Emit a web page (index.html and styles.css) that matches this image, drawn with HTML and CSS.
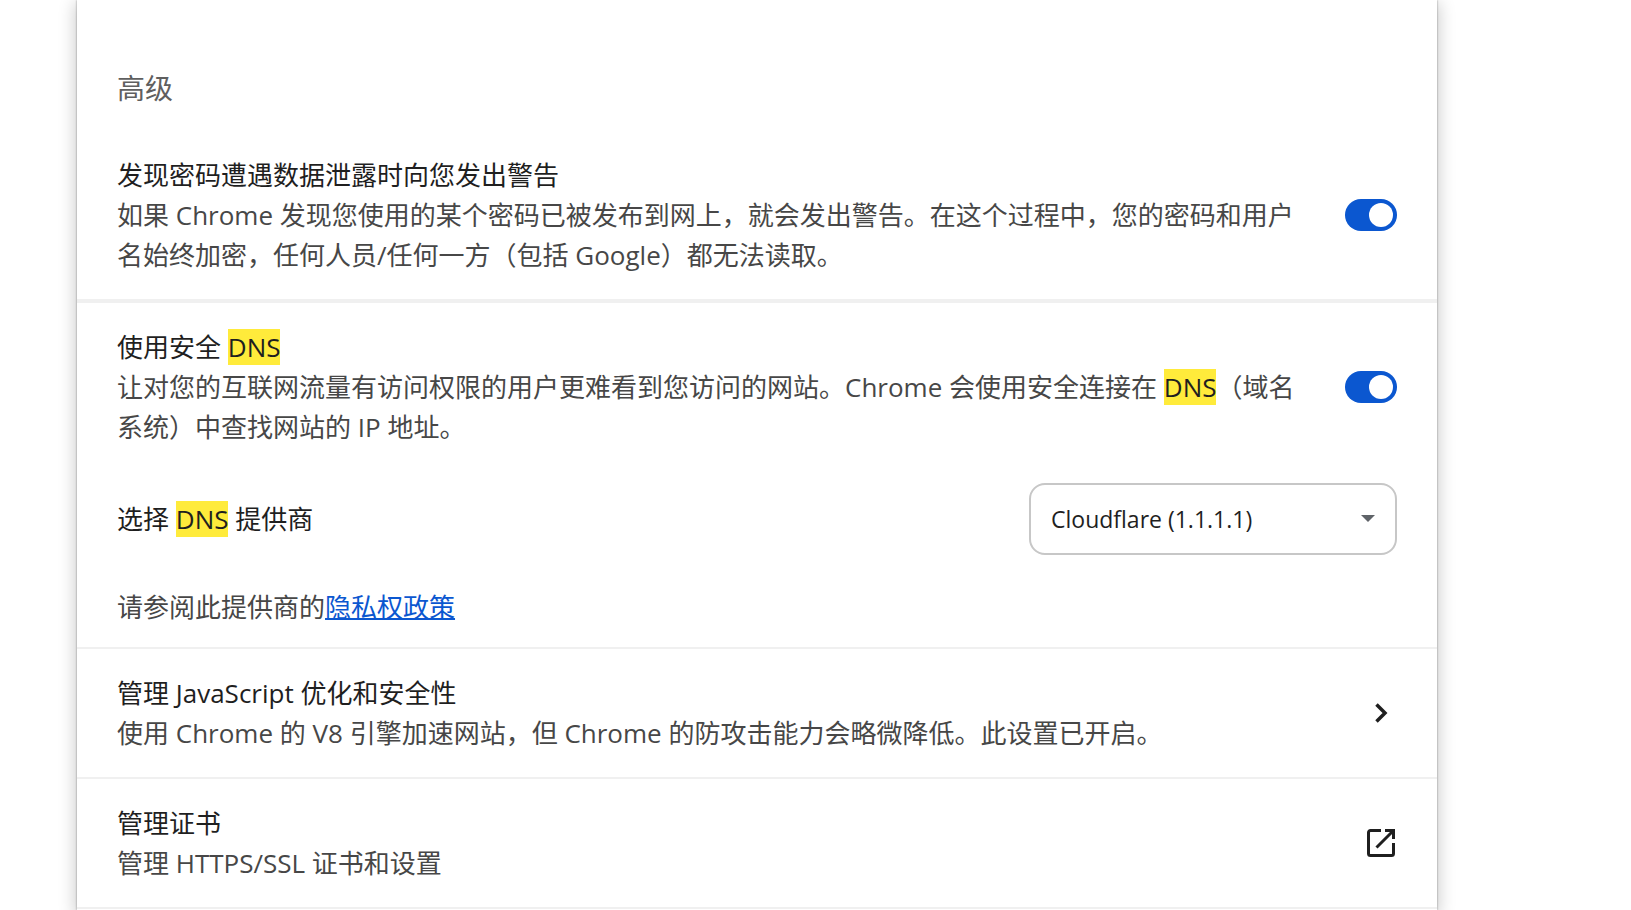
FILE: index.html
```html
<!DOCTYPE html>
<html lang="zh-CN">
<head>
    <meta charset="UTF-8">
    <meta name="viewport" content="width=device-width, initial-scale=1.0">
    <title>安全 - 设置</title>
    <link rel="stylesheet" href="styles.css">
</head>
<body>
    <main class="card">
        <h2 class="section-title">高级</h2>

        <div class="row row-thick">
            <label class="text" for="leakToggle">
                <span class="title">发现密码遭遇数据泄露时向您发出警告</span>
                <span class="sub">如果 Chrome 发现您使用的某个密码已被发布到网上，就会发出警告。在这个过程中，您的密码和用户名始终加密，任何人员/任何一方（包括 Google）都无法读取。</span>
            </label>
            <input class="toggle" type="checkbox" id="leakToggle" checked>
        </div>

        <!-- 安全 DNS -->
        <div class="row">
            <label class="text" for="dnsToggle">
                <span class="title">使用安全 <mark>DNS</mark></span>
                <span class="sub">让对您的互联网流量有访问权限的用户更难看到您访问的网站。Chrome 会使用安全连接在 <mark>DNS</mark>（域名系统）中查找网站的 IP 地址。</span>
            </label>
            <input class="toggle" type="checkbox" id="dnsToggle" checked>
        </div>
        <div class="row row-select">
            <label class="title" for="provider">选择 <mark>DNS</mark> 提供商</label>
            <div class="select-wrap">
                <select id="provider">
                    <option>Cloudflare (1.1.1.1)</option>
                </select>
                <svg class="arrow" viewBox="0 0 14 7"><path d="M0 0h14L7 7z"/></svg>
            </div>
        </div>
        <p class="policy">请参阅此提供商的<a href="#">隐私权政策</a></p>

        <div class="row row-line">
            <div class="text">
                <span class="title" id="jsTitle">管理 JavaScript 优化和安全性</span>
                <span class="sub">使用 Chrome 的 V8 引擎加速网站，但 Chrome 的防攻击能力会略微降低。此设置已开启。</span>
            </div>
            <button class="icon-btn" aria-labelledby="jsTitle">
                <svg viewBox="0 0 32 32"><path stroke-width="3.5" d="M11.500 7.500 20 16l-8.500 8.500"/></svg>
            </button>
        </div>

        <div class="row row-line row-last">
            <div class="text">
                <span class="title" id="certTitle">管理证书</span>
                <span class="sub">管理 HTTPS/SSL 证书和设置</span>
            </div>
            <button class="icon-btn" aria-labelledby="certTitle">
                <svg viewBox="0 0 32 32"><path d="M16 3.500H5.500a2 2 0 0 0-2 2v21a2 2 0 0 0 2 2h21a2 2 0 0 0 2-2V16M20 3.500h8.500V12M28.500 3.500l-17 17"/></svg>
            </button>
        </div>
    </main>
</body>
</html>
```

FILE: styles.css
```css
* {
    box-sizing: border-box;
}

body {
    margin: 0;
    background-color: #fff;
    color: #1f1f1f;
    font-family: "Open Sans", "Noto Sans CJK SC", sans-serif;
    font-size: 26px;
    line-height: 40px;
}

.card {
    min-height: 100vh;
    margin: 0 194px 0 77px;
    padding-top: 48px;
    background-color: #fff;
    box-shadow: 0 0 2px rgba(0, 0, 0, 0.4), 0 4px 16px 2px rgba(0, 0, 0, 0.2);
}

.section-title {
    margin: 0;
    padding: 20px 40px 23px;
    font-size: 28px;
    font-weight: 400;
    color: #5f5f5f;
}

.row {
    display: flex;
    align-items: center;
    justify-content: space-between;
    gap: 40px;
    padding: 24px 40px;
}

.row-thick {
    border-bottom: 4px solid #f0f0f0;
}

.row-line {
    border-top: 2px solid #f0f0f0;
}

.row-last {
    border-bottom: 2px solid #f0f0f0;
}

.row-select {
    padding: 12px 40px;
}

.text {
    flex: 1;
}

.title,
.sub {
    display: block;
}

.sub,
.policy {
    color: #474747;
}

mark {
    background-color: #ffeb3b;
    color: #1f1f1f;
}

/* 开关 */
.toggle {
    appearance: none;
    display: flex;
    align-items: center;
    justify-content: flex-end;
    width: 52px;
    height: 32px;
    margin: 0;
    padding: 4px;
    border-radius: 16px;
    background-color: #c7c7c7;
    cursor: pointer;
}

.toggle::before {
    content: "";
    width: 24px;
    height: 24px;
    border-radius: 50%;
    background-color: #fff;
}

.toggle:checked {
    background-color: #0b57d0;
}

.toggle:not(:checked) {
    justify-content: flex-start;
}

/* 下拉菜单 */
.select-wrap {
    position: relative;
    width: 368px;
}

select {
    appearance: none;
    width: 100%;
    height: 72px;
    padding: 0 48px 0 20px;
    border: 2px solid #c7c7c7;
    border-radius: 16px;
    background-color: #fff;
    color: #1f1f1f;
    font-family: inherit;
    font-size: 23px;
}

.arrow {
    position: absolute;
    top: 32px;
    right: 22px;
    width: 14px;
    height: 7px;
    fill: #5f6368;
    pointer-events: none;
}

.policy {
    margin: 0;
    padding: 20px 40px;
}

.policy a {
    color: #0b57d0;
    text-decoration-thickness: 2px;
}

.icon-btn {
    width: 32px;
    height: 32px;
    padding: 0;
    border: none;
    background: none;
    cursor: pointer;
}

.icon-btn svg {
    display: block;
    fill: none;
    stroke: #1f1f1f;
    stroke-width: 3;
}
```
